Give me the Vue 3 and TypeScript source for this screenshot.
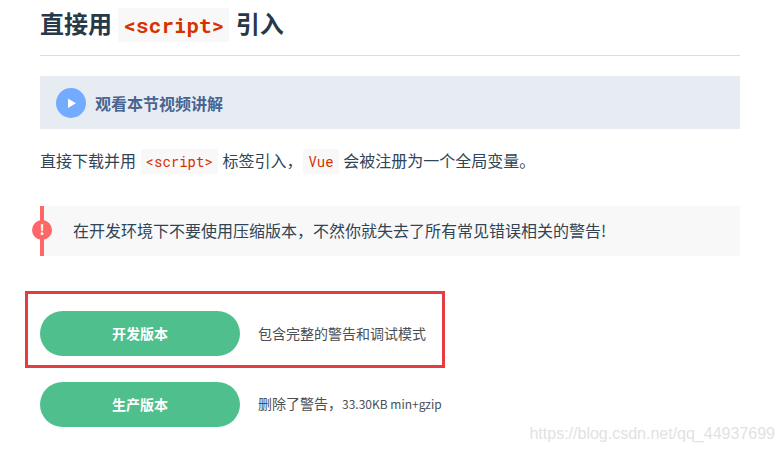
<script setup lang="ts">
interface Download {
  label: string
  note: string
  size: string
  marked: boolean
}

const downloads: Download[] = [
  { label: '开发版本', note: '包含完整的警告和调试模式', size: '', marked: true },
  { label: '生产版本', note: '删除了警告，', size: '33.30KB min+gzip', marked: false },
]
</script>

<template>
  <main class="content">
    <h2>直接用 <code>&lt;script&gt;</code> 引入</h2>
    <a class="lesson" href="#video">
      <svg viewBox="0 0 30 30" aria-hidden="true">
        <circle cx="15" cy="15" r="15" fill="#73abff" />
        <path d="M12 10.500v9.500l8-4.750z" fill="#fff" />
      </svg>
      <span>观看本节视频讲解</span>
    </a>
    <p class="intro">直接下载并用 <code>&lt;script&gt;</code> 标签引入，<code>Vue</code> 会被注册为一个全局变量。</p>
    <p class="tip"><span class="badge">!</span>在开发环境下不要使用压缩版本，不然你就失去了所有常见错误相关的警告!</p>
    <div class="downloads">
      <div v-for="item in downloads" :key="item.label" class="row" :class="{ marked: item.marked }">
        <a class="button" href="#download">{{ item.label }}</a>
        <span class="note">{{ item.note }}<span v-if="item.size" class="size">{{ item.size }}</span></span>
      </div>
    </div>
    <span class="watermark">https://blog.csdn.net/qq_44937699</span>
  </main>
</template>

<style>
body {
  margin: 0;
  background: #fff;
}
</style>

<style scoped>
.content {
  position: relative;
  box-sizing: border-box;
  min-height: 100vh;
  padding: 0 44px 0 40px;
  color: #304455;
  font-family: "Noto Sans CJK SC", sans-serif;
  font-size: 16px;
}
h2 {
  margin: 0;
  height: 56px;
  box-sizing: border-box;
  padding-top: 5px;
  border-bottom: 1px solid #ddd;
  color: #273849;
  font-size: 24px;
  line-height: 36px;
  font-weight: 700;
}
code {
  font-family: "Roboto Mono", "Liberation Mono", monospace;
  color: #d63200;
  background: #f8f8f8;
  border-radius: 2px;
  padding: 3px 5px;
  margin: 0 1px;
  font-size: 14px;
}
h2 code {
  font-size: 21px;
}
.lesson {
  display: flex;
  align-items: center;
  gap: 9px;
  margin-top: 20px;
  padding: 12px 16px 11px;
  background: #e7ecf3;
  color: #486491;
  font-weight: 700;
  line-height: 28px;
  text-decoration: none;
}
.lesson svg {
  width: 30px;
  height: 30px;
}
.intro {
  margin: 18px 0 0;
  line-height: 26px;
}
.tip {
  position: relative;
  margin: 31px 0 0;
  padding: 11px 24px 13px 29px;
  border-left: 4px solid #f66;
  background: #f8f8f8;
  line-height: 26px;
}
.badge {
  position: absolute;
  left: -12px;
  top: 14px;
  width: 20px;
  height: 20px;
  border-radius: 50%;
  background: #f66;
  color: #fff;
  font-size: 14px;
  font-weight: 700;
  line-height: 18px;
  text-align: center;
}
.downloads {
  display: flex;
  flex-direction: column;
  align-items: flex-start;
  gap: 14px;
  margin: 35px 0 0 -15px;
}
.row {
  display: flex;
  align-items: center;
  gap: 18px;
  padding: 0 15px;
}
.marked {
  padding: 17px 16px 9px 12px;
  border: 3px solid #e63c3f;
}
.button {
  width: 200px;
  border-radius: 23px;
  background: #4fc08d;
  color: #fff;
  font-size: 14px;
  font-weight: 700;
  line-height: 45px;
  text-align: center;
  text-decoration: none;
}
.note {
  padding-bottom: 2px;
  color: #4a4f55;
  font-size: 14px;
  line-height: 20px;
}
.size {
  font-size: 12px;
}
.watermark {
  position: absolute;
  right: 9px;
  bottom: 8px;
  color: #e2e2e2;
  font-family: "Liberation Sans", sans-serif;
  font-size: 16px;
  line-height: 20px;
}
</style>
